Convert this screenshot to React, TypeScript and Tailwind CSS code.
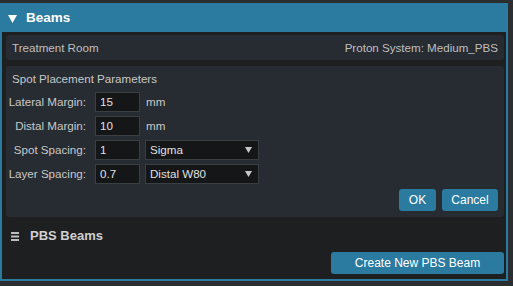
import React from "react";

const font = { fontFamily: '"Liberation Sans", Arial, sans-serif' };

function Row({ label, value, unit, select }: { label: string; value: string; unit?: string; select?: string }) {
  return (
    <div className="flex items-center h-[24px]">
      <div className="w-[80px] text-right text-[11.6px] text-[#c8c8c8] shrink-0">{label}</div>
      <div className="ml-[9px] w-[45px] h-[20px] bg-[#141618] border border-[#3a3f44] text-[11.6px] text-[#e0e0e0] pl-[4px] flex items-center">{value}</div>
      {unit && <div className="ml-[6px] text-[11.6px] text-[#c8c8c8]">{unit}</div>}
      {select && (
        <div className="ml-[5px] w-[114px] h-[20px] bg-[#141618] border border-[#3a3f44] text-[11.6px] text-[#e0e0e0] pl-[4px] pr-[6px] flex items-center justify-between">
          <span>{select}</span>
          <svg width="7" height="6" viewBox="0 0 7 6"><path d="M0 0 L7 0 L3.5 6 Z" fill="#c8c8c8" /></svg>
        </div>
      )}
    </div>
  );
}

export default function App() {
  return (
    <div className="w-[513px] h-[286px] bg-[#2b2e31] pt-[3px] pr-[5px] pb-[5px] flex" style={font}>
      <div className="flex-1 flex flex-col border-2 border-[#2b7aa0] bg-[#1e1f21]">
        <div className="h-[29px] bg-[#2b7aa0] flex items-center pl-[6px] -mx-[2px] -mt-[2px] pt-[2px]">
          <svg width="9" height="8" viewBox="0 0 9 8" className="ml-[2px]"><path d="M0 0 L9 0 L4.5 8 Z" fill="#ffffff" /></svg>
          <span className="ml-[9px] text-[13.5px] font-bold text-white">Beams</span>
        </div>
        <div className="flex-1 flex flex-col pl-[4px] pr-[2px] pt-[3px]">
          <div className="h-[25px] bg-[#272c32] rounded-[3px] flex items-center justify-between px-[6px] text-[11.6px] text-[#bfbfbf]">
            <span>Treatment Room</span>
            <span>Proton System: Medium_PBS</span>
          </div>
          <div className="mt-[6px] h-[151px] bg-[#272c32] rounded-[3px] pt-[5px] flex flex-col">
            <div className="pl-[6px] text-[11.6px] text-[#c8c8c8] h-[16px] leading-[16px]">Spot Placement Parameters</div>
            <div className="mt-[3px] flex flex-col">
              <Row label="Lateral Margin:" value="15" unit="mm" />
              <Row label="Distal Margin:" value="10" unit="mm" />
              <Row label="Spot Spacing:" value="1" select="Sigma" />
              <Row label="Layer Spacing:" value="0.7" select="Distal W80" />
            </div>
            <div className="flex justify-end gap-[6px] pr-[6px] mt-[3px]">
              <button className="w-[37px] h-[22px] bg-[#2b7aa0] rounded-[3px] text-[12px] text-white">OK</button>
              <button className="w-[56px] h-[22px] bg-[#2b7aa0] rounded-[3px] text-[12px] text-white">Cancel</button>
            </div>
          </div>
          <div className="mt-[11px] flex items-center h-[16px] pl-[5px]">
            <svg width="8" height="9" viewBox="0 0 8 9"><rect x="0" y="0" width="8" height="2" fill="#bdbdbd" /><rect x="0" y="3.5" width="8" height="2" fill="#bdbdbd" /><rect x="0" y="7" width="8" height="2" fill="#bdbdbd" /></svg>
            <span className="ml-[11px] text-[13px] font-bold text-[#d0d0d0]">PBS Beams</span>
          </div>
          <div className="mt-[8px] flex justify-end">
            <button className="w-[173px] h-[22px] bg-[#2b7aa0] rounded-[3px] text-[12px] text-white">Create New PBS Beam</button>
          </div>
        </div>
      </div>
    </div>
  );
}
